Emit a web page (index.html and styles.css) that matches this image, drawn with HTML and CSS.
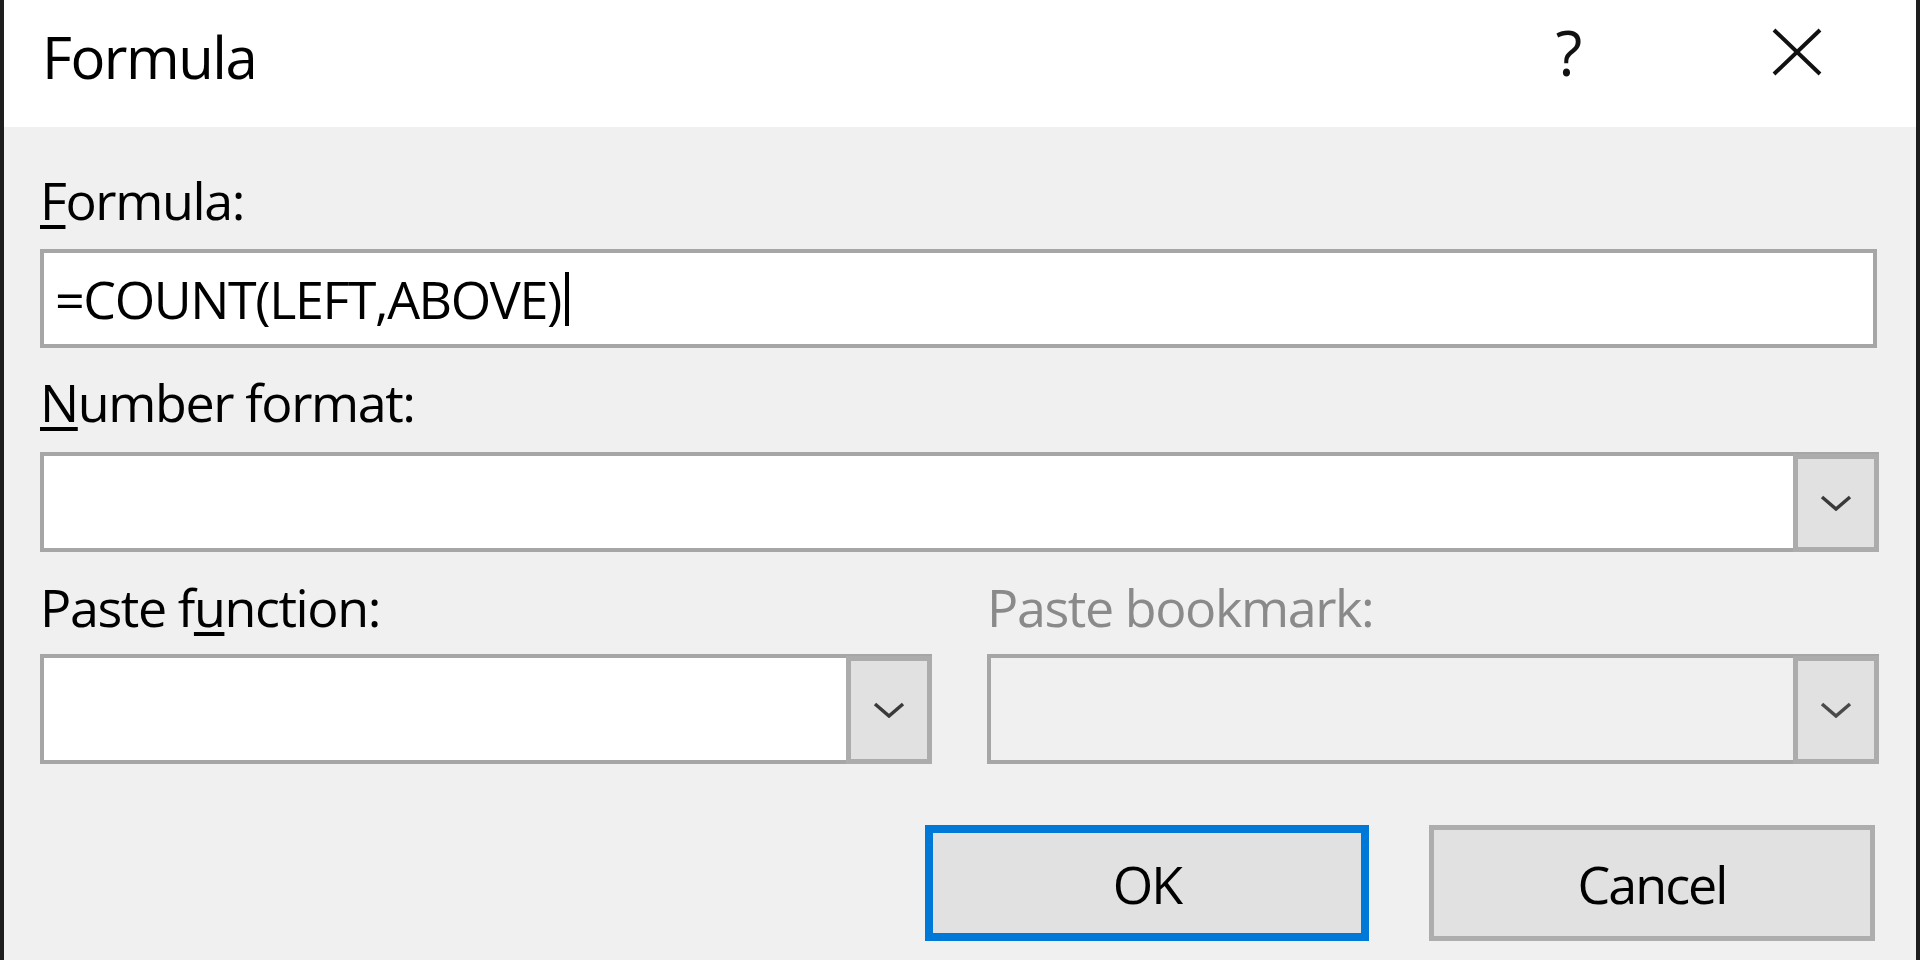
FILE: index.html
```html
<!DOCTYPE html>
<html lang="en">
<head>
    <meta charset="UTF-8" />
    <meta name="viewport" content="width=device-width, initial-scale=1.0" />
    <title>Formula</title>
    <link rel="stylesheet" href="styles.css">
</head>
<body>

<div class="dialog">

    <div class="titlebar">
        <span class="title">Formula</span>
        <div class="caption">
            <span class="caption-btn help">?</span>
            <span class="caption-btn">
                <svg class="close-icon" width="50" height="48" viewBox="0 0 50 48">
                    <path d="M2 2 L48 46 M48 2 L2 46" stroke="#111" stroke-width="4" fill="none" />
                </svg>
            </span>
        </div>
    </div>

    <div class="content">

        <label class="field-label first"><u>F</u>ormula:</label>
        <div class="textbox">
            <span class="textbox-value">=COUNT(LEFT,ABOVE)</span><span class="caret"></span>
        </div>

        <label class="field-label second"><u>N</u>umber format:</label>
        <div class="combo">
            <div class="combo-value"></div>
            <div class="combo-btn">
                <svg width="32" height="16" viewBox="0 0 32 16"><path d="M2 2 L16 14 L30 2" stroke="#3a3a3a" stroke-width="3.5" fill="none" /></svg>
            </div>
        </div>

        <div class="two-cols">
            <div class="col">
                <label class="field-label third">Paste f<u>u</u>nction:</label>
                <div class="combo tall">
                    <div class="combo-value"></div>
                    <div class="combo-btn">
                        <svg width="32" height="16" viewBox="0 0 32 16"><path d="M2 2 L16 14 L30 2" stroke="#3a3a3a" stroke-width="3.5" fill="none" /></svg>
                    </div>
                </div>
            </div>
            <div class="col">
                <label class="field-label third disabled">Paste bookmark:</label>
                <div class="combo tall disabled">
                    <div class="combo-value"></div>
                    <div class="combo-btn">
                        <svg width="32" height="16" viewBox="0 0 32 16"><path d="M2 2 L16 14 L30 2" stroke="#4a4a4a" stroke-width="3.5" fill="none" /></svg>
                    </div>
                </div>
            </div>
        </div>

        <div class="buttons">
            <button class="btn default">OK</button>
            <button class="btn">Cancel</button>
        </div>

    </div>
</div>

</body>
</html>
```

FILE: styles.css
```css
html, body {
    margin: 0;
    height: 100%;
}

body {
    font-family: "Open Sans", "Noto Sans", sans-serif;
    background: #f0f0f0;
    color: #000;
    overflow: hidden;
}

*, *:before, *:after {
    box-sizing: border-box;
}

.dialog {
    height: 960px;
    border-left: 4px solid #1e1e1e;
    border-right: 4px solid #1e1e1e;
    display: flex;
    flex-direction: column;
    background: #f0f0f0;
}

/* title bar */
.titlebar {
    height: 127px;
    background: #fff;
    display: flex;
    align-items: center;
    padding-left: 38px;
    padding-right: 49px;
}

.title {
    font-size: 58px;
    letter-spacing: -1.5px;
    line-height: 1;
    margin-top: -14px;
}

.caption {
    margin-left: auto;
    margin-top: -24px;
    display: flex;
    gap: 88px;
}

.caption-btn {
    width: 140px;
    display: flex;
    justify-content: center;
    align-items: center;
    height: 60px;
}

.help {
    font-size: 62px;
    line-height: 1;
    color: #111;
}

/* form */
.content {
    padding: 45px 37px 0 36px;
    display: flex;
    flex-direction: column;
}

.field-label {
    display: block;
    font-size: 52px;
    line-height: 56px;
    letter-spacing: -1.4px;
    white-space: nowrap;
}

.field-label u {
    text-decoration-thickness: 4px;
    text-underline-offset: 5px;
}

.field-label.first {
    margin-bottom: 21px;
}

.field-label.second {
    margin-top: 26px;
    margin-bottom: 22px;
}

.field-label.third {
    margin-top: 27px;
    margin-bottom: 19px;
}

.field-label.disabled {
    color: #8a8a8a;
}

.textbox {
    height: 99px;
    margin-right: 2px;
    background: #fff;
    border: 4px solid #a6a6a6;
    display: flex;
    align-items: center;
    padding-left: 11px;
}

.textbox-value {
    font-size: 52px;
    line-height: 56px;
    letter-spacing: -1.4px;
}

.caret {
    display: inline-block;
    width: 4px;
    height: 54px;
    background: #000;
    margin-left: 4px;
}

.combo {
    height: 100px;
    background: #fff;
    border: 4px solid #a6a6a6;
    display: flex;
}

.combo.tall {
    height: 110px;
}

.combo.disabled {
    background: #f0f0f0;
}

.combo-value {
    flex: 1;
}

.combo-btn {
    width: 86px;
    margin: -2px -4px -4px 0;
    background: #e1e1e1;
    border: 5px solid #acacac;
    display: flex;
    justify-content: center;
    align-items: center;
}

.two-cols {
    display: grid;
    grid-template-columns: 1fr 1fr;
    gap: 55px;
}

/* buttons */
.buttons {
    margin-top: 61px;
    display: flex;
    justify-content: flex-end;
    gap: 60px;
    padding-right: 4px;
}

.btn {
    width: 446px;
    height: 116px;
    background: #e1e1e1;
    border: 5px solid #adadad;
    font-family: "Open Sans", "Noto Sans", sans-serif;
    font-size: 52px;
    letter-spacing: -2px;
    color: #000;
    padding: 0;
}

.btn.default {
    width: 444px;
    border: 8px solid #0078d7;
}
```
